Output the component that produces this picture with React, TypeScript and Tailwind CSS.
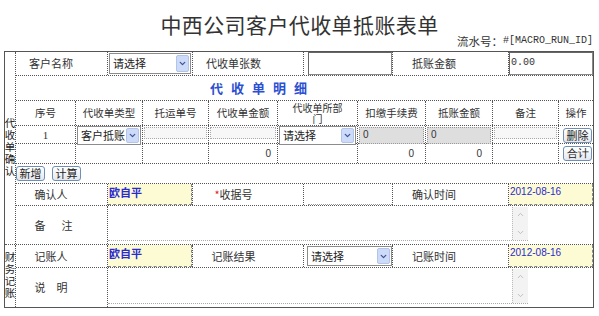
import { ChevronDown, ChevronUp } from "lucide-react";

const CJK = "font-['Noto_Sans_CJK_SC','Noto_Sans',sans-serif]";
const LINE_B = "border-b border-dotted border-[#555]";
const LINE_R = "border-r border-dotted border-[#555]";
const FORM_COLS = "grid grid-cols-[92px_85px_111px_89px_116px_84px]";
const DETAIL_COLS = "grid grid-cols-[60px_67px_66px_69px_80px_68px_67px_66px_34px]";

function Side({ text }: { text: string }) {
  return (
    <div className="flex w-[11px] shrink-0 items-center justify-center border-r border-dotted border-[#555] text-[10.5px] leading-[11px] text-[#222]">
      <span className="tracking-[1.5px] [writing-mode:vertical-rl]">{text}</span>
    </div>
  );
}

function Select({ text, className = "" }: { text: string; className?: string }) {
  return (
    <div className={`flex items-center border border-[#8c8c8c] bg-white pl-[3px] ${className}`}>
      <span className="flex-1 overflow-hidden whitespace-nowrap text-[11px] text-[#222]">{text}</span>
      <span className="mr-[1px] flex h-[calc(100%-2px)] w-[13px] shrink-0 items-center justify-center rounded-[2px] border border-[#b3c4ea] bg-[#cddaf8]">
        <ChevronDown size={9} strokeWidth={3.5} className="text-[#3c5597]" />
      </span>
    </div>
  );
}

function Btn({ text }: { text: string }) {
  return (
    <div className="flex h-[15px] w-[29px] items-center justify-center rounded-[3px] border border-[#6f8fb4] bg-gradient-to-b from-white to-[#e4e8ee] text-[11px] leading-none text-[#222]">
      {text}
    </div>
  );
}

function Yellow({ text, mono = false }: { text: string; mono?: boolean }) {
  return (
    <div
      className={`h-full border-b border-r border-dashed border-[#888] bg-[#fdfbd4] pl-[1px] pt-[2px] leading-[12px] text-[#2a2ad0] ${
        mono ? "font-['Liberation_Sans',sans-serif] text-[10px]" : "text-[11px] font-semibold"
      }`}
    >
      {text}
    </div>
  );
}

function TextArea() {
  return (
    <div className="flex h-[calc(100%-3px)] w-[420px] justify-end border-b border-dotted border-[#aaa]">
      <div className="flex w-[16px] flex-col items-center justify-between border-l border-dotted border-[#bbb] bg-[#f3f3f3] py-[3px]">
        <ChevronUp size={9} strokeWidth={2.5} className="text-[#bbb]" />
        <ChevronDown size={9} strokeWidth={2.5} className="text-[#bbb]" />
      </div>
    </div>
  );
}

export default function App() {
  return (
    <div className={`h-[316px] w-[599px] overflow-hidden bg-white text-[#333] ${CJK}`}>
      <h1 className="h-[34px] pt-[9px] text-center text-[21px] font-normal leading-[30px] tracking-[0.4px] text-[#333]">
        中西公司客户代收单抵账表单
      </h1>
      <div className="flex h-[14px] items-center justify-end pr-[6px] text-[11.5px] leading-[14px]">
        <span>流水号：</span>
        <span className="font-['Liberation_Mono',monospace] text-[10px]">#[MACRO_RUN_ID]</span>
      </div>

      <div className="ml-[4px] mt-[3px] w-[590px] border border-[#555] text-[11px]">
        {/* 代收单确认 */}
        <div className={`flex ${LINE_B}`}>
          <Side text="代收单确认" />
          <div className="w-[577px]">
            <div className={`${FORM_COLS} h-[24px] ${LINE_B}`}>
              <div className={`flex items-center justify-center pr-[21px] ${LINE_R}`}>客户名称</div>
              <div className={`p-[1px] ${LINE_R}`}>
                <Select text="请选择" className="h-full" />
              </div>
              <div className={`flex items-center justify-center pr-[29px] ${LINE_R}`}>代收单张数</div>
              <div className={`pl-[4px] ${LINE_R}`}>
                <div className="h-full border border-[#888] border-l-[#666] border-t-[#666]" />
              </div>
              <div className={`flex items-center justify-center pr-[33px] ${LINE_R}`}>抵账金额</div>
              <div className="border border-[#888] border-l-[#666] border-t-[#666] pl-[1px] pt-[3px] font-['Liberation_Mono',monospace] text-[10px] leading-[14px]">
                0.00
              </div>
            </div>

            <div className={`flex h-[25px] items-center pl-[194px] text-[13px] font-bold tracking-[8px] text-[#2b4fd0] ${LINE_B}`}>
              代收单明细
            </div>

            <div className={`${DETAIL_COLS} h-[25px] text-[10.5px] ${LINE_B}`}>
              {["序号", "代收单类型", "托运单号", "代收单金额"].map((t) => (
                <div key={t} className={`flex items-center justify-center ${LINE_R}`}>
                  {t}
                </div>
              ))}
              <div className={`flex items-center justify-center text-[10px] ${LINE_R}`}>
                <span className="w-[52px] text-center leading-[11px]">代收单所部门</span>
              </div>
              {["扣缴手续费", "抵账金额", "备注"].map((t) => (
                <div key={t} className={`flex items-center justify-center ${LINE_R}`}>
                  {t}
                </div>
              ))}
              <div className="flex items-center justify-center">操作</div>
            </div>

            <div className={`${DETAIL_COLS} h-[18px] ${LINE_B}`}>
              <div className={`flex items-center justify-center font-['Liberation_Serif',serif] ${LINE_R}`}>1</div>
              <div className={`px-[1px] ${LINE_R}`}>
                <Select text="客户抵账" className="h-full" />
              </div>
              <div className={`p-[1px] ${LINE_R}`}>
                <div className="h-[12px] border border-dotted border-[#aaa] bg-[#f7f7f7]" />
              </div>
              <div className={`p-[1px] ${LINE_R}`}>
                <div className="h-[12px] border border-dotted border-[#aaa] bg-[#f7f7f7]" />
              </div>
              <div className={`px-[1px] ${LINE_R}`}>
                <Select text="请选择" className="h-full" />
              </div>
              <div className={`p-[1px] ${LINE_R}`}>
                <div className="h-full border border-dotted border-[#999] bg-[#dedede] pl-[3px] font-['Liberation_Sans',sans-serif] text-[10px] leading-[13px]">0</div>
              </div>
              <div className={`p-[1px] ${LINE_R}`}>
                <div className="h-full border border-dotted border-[#999] bg-[#dedede] pl-[3px] font-['Liberation_Sans',sans-serif] text-[10px] leading-[13px]">0</div>
              </div>
              <div className={`p-[1px] ${LINE_R}`}>
                <div className="h-[12px] border border-dotted border-[#aaa] bg-[#f7f7f7]" />
              </div>
              <div className="flex items-center justify-end pr-[1px]">
                <Btn text="删除" />
              </div>
            </div>

            <div className={`${DETAIL_COLS} h-[20px] font-['Liberation_Sans',sans-serif] text-[10px] ${LINE_B}`}>
              <div className={LINE_R} />
              <div className={LINE_R} />
              <div className={LINE_R} />
              <div className={`flex items-center justify-end pr-[6px] ${LINE_R}`}>0</div>
              <div className={LINE_R} />
              <div className={`flex items-center justify-end pr-[11px] ${LINE_R}`}>0</div>
              <div className={`flex items-center justify-end pr-[10px] ${LINE_R}`}>0</div>
              <div className={LINE_R} />
              <div className="flex items-center justify-end pr-[1px]">
                <Btn text="合计" />
              </div>
            </div>

            <div className={`flex h-[20px] items-center gap-[7px] ${LINE_B}`}>
              <Btn text="新增" />
              <Btn text="计算" />
            </div>

            <div className={`${FORM_COLS} h-[22px] ${LINE_B}`}>
              <div className={`flex items-center justify-center pr-[21px] ${LINE_R}`}>确认人</div>
              <div className={LINE_R}>
                <Yellow text="欧自平" />
              </div>
              <div className={`flex items-center justify-center pr-[29px] ${LINE_R}`}>
                <span className="text-[#e02020]">*</span>收据号
              </div>
              <div className={`pl-[4px] ${LINE_R}`}>
                <div className="h-full border-b border-dotted border-[#999]" />
              </div>
              <div className={`flex items-center justify-center pr-[33px] ${LINE_R}`}>确认时间</div>
              <div>
                <Yellow text="2012-08-16" mono />
              </div>
            </div>

            <div className="grid h-[38px] grid-cols-[92px_485px]">
              <div className={`flex items-center justify-center pr-[16px] ${LINE_R}`}>
                <span>备</span>
                <span className="ml-[16px]">注</span>
              </div>
              <div className="pt-[1px]">
                <TextArea />
              </div>
            </div>
          </div>
        </div>

        {/* 财务记账 */}
        <div className="flex">
          <Side text="财务记账" />
          <div className="w-[577px]">
            <div className={`${FORM_COLS} h-[23px] ${LINE_B}`}>
              <div className={`flex items-center justify-center pr-[21px] ${LINE_R}`}>记账人</div>
              <div className={LINE_R}>
                <Yellow text="欧自平" />
              </div>
              <div className={`flex items-center justify-center pr-[29px] ${LINE_R}`}>记账结果</div>
              <div className={`py-[1px] pl-[3px] ${LINE_R}`}>
                <Select text="请选择" className="h-full" />
              </div>
              <div className={`flex items-center justify-center pr-[33px] ${LINE_R}`}>记账时间</div>
              <div>
                <Yellow text="2012-08-16" mono />
              </div>
            </div>
            <div className="grid h-[39px] grid-cols-[92px_485px]">
              <div className={`flex items-center justify-center pr-[21px] ${LINE_R}`}>
                <span>说</span>
                <span className="ml-[11px]">明</span>
              </div>
              <div className="pt-[1px]">
                <TextArea />
              </div>
            </div>
          </div>
        </div>
      </div>
    </div>
  );
}
